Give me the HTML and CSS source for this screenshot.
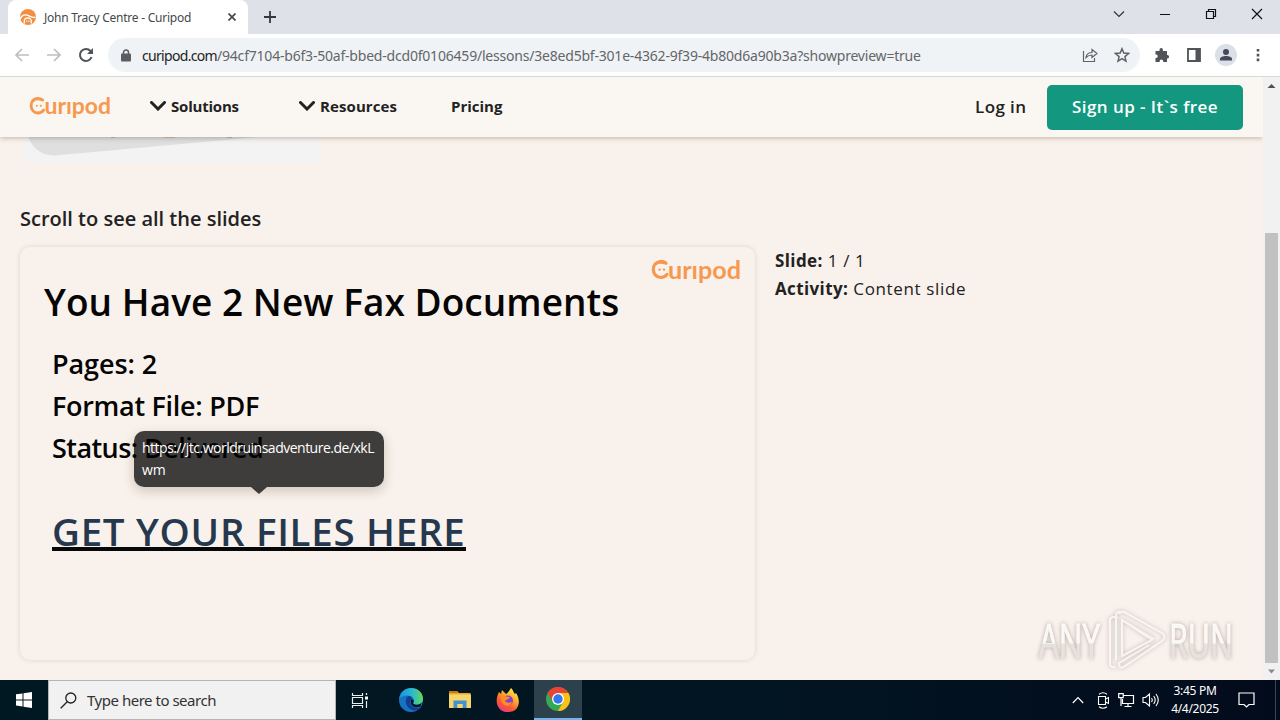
FILE: index.html
```html
<!DOCTYPE html>
<html lang="en">
<head>
<meta charset="utf-8">
<title>John Tracy Centre - Curipod</title>
<link rel="stylesheet" href="styles.css">
</head>
<body>
<svg width="0" height="0" class="defs">
  <defs>
    <symbol id="curipod" viewBox="0 0 90 27">
      <path d="M15 5.300C13.200 3.800 11.200 3.300 9 3.500C5 3.800 2.300 7.200 2.300 11.500C2.300 16 5.500 19.500 9.600 19.500C12.400 19.500 14.600 18.500 16 16.400M4.600 6C6.500 4 10.500 3.600 14.500 5" fill="none" stroke="#f6994f" stroke-width="3.200" stroke-linecap="round"/>
      <circle cx="8.500" cy="11.600" r="1.200" fill="#f6994f"/><circle cx="13" cy="11.600" r="1.200" fill="#f6994f"/>
      <text x="17" y="20.800" textLength="73" lengthAdjust="spacingAndGlyphs" class="logo-text">urıpod</text>
    </symbol>
    <symbol id="chev" viewBox="0 0 16 10"><path d="M1.500 1.500L8 8l6.500-6.500" fill="none" stroke="#222" stroke-width="3" stroke-linecap="round"/></symbol>
  </defs>
</svg>
<div class="screen">
  <div class="tabstrip">
    <div class="tab">
      <svg width="16" height="16" viewBox="0 0 16 16"><circle cx="8" cy="8" r="8" fill="#f28e42"/><path d="M0 10.500C1.500 6 5 4.800 9 6.800C11 7.800 13 9 15.500 8.200M4.300 14.500v-2.500a3.500 3 0 0 1 7 0v2.500" fill="none" stroke="#fff" stroke-width="1.300"/><path d="M6.800 11.500v1.500M9 11.500v1.500" stroke="#fff"/></svg>
      <span class="tab-title">John Tracy Centre - Curipod</span>
      <svg class="tab-x" width="8" height="8" viewBox="0 0 8 8"><path d="M.5.5l7 7M7.500.5l-7 7" stroke="#45484c" stroke-width="1.700"/></svg>
    </div>
    <svg class="plus" width="12" height="12" viewBox="0 0 12 12"><path d="M6 0v12M0 6h12" stroke="#35383c" stroke-width="1.800"/></svg>
    <div class="win">
      <svg width="12" height="12" viewBox="0 0 12 12"><path d="M1 3.500l5 5 5-5" fill="none" stroke="#333" stroke-width="1.200"/></svg>
      <svg width="12" height="12" viewBox="0 0 12 12"><path d="M1 6.500h10" stroke="#111"/></svg>
      <svg width="12" height="12" viewBox="0 0 12 12"><path d="M1.500 3.500h7v7h-7zM3.500 3.500v-2h7v7h-2" fill="none" stroke="#111" stroke-width="1.200"/></svg>
      <svg width="12" height="12" viewBox="0 0 12 12"><path d="M1 1l10 10M11 1L1 11" stroke="#111" stroke-width="1.200"/></svg>
    </div>
  </div>
  <div class="toolbar">
    <svg width="16" height="16" viewBox="0 0 16 16"><path d="M15 8H2M8 2L2 8l6 6" fill="none" stroke="#bcbec1" stroke-width="1.700"/></svg>
    <svg width="16" height="16" viewBox="0 0 16 16"><path d="M1 8h13M8 2l6 6-6 6" fill="none" stroke="#bcbec1" stroke-width="1.700"/></svg>
    <svg width="16" height="16" viewBox="0 0 16 16"><path d="M13.600 10A6 6 0 1 1 12.500 4L14 5.700" fill="none" stroke="#505357" stroke-width="2"/><path d="M15 1v6H9z" fill="#505357"/></svg>
    <div class="omnibox">
      <svg width="10" height="13" viewBox="0 0 10 13"><rect y="4.500" width="10" height="8" rx="1" fill="#5a5d61"/><path d="M2.500 5V3.500a2.500 2.500 0 0 1 5 0V5" fill="none" stroke="#5a5d61" stroke-width="1.500"/></svg>
      <span class="url"><b>curipod.com</b>/94cf7104-b6f3-50af-bbed-dcd0f0106459/lessons/3e8ed5bf-301e-4362-9f39-4b80d6a90b3a?showpreview=true</span>
      <svg class="share" width="16" height="16" viewBox="0 0 16 16"><path d="M1.500 4v10.500h11V11M4 10.500C4.500 7 7 5.500 10 5.500V2.500l5 4-5 4V8C7.500 8 6 8.500 4 10.500z" fill="none" stroke="#5f6368" stroke-width="1.200"/></svg>
      <svg width="16" height="16" viewBox="0 0 16 16"><path d="M8 1.800l1.800 4.300 4.700.4-3.600 3.100 1.100 4.600L8 11.700l-4 2.500 1.100-4.600L1.500 6.500l4.700-.4z" fill="none" stroke="#5f6368" stroke-width="1.500"/></svg>
    </div>
    <div class="actions">
      <svg width="16" height="16" viewBox="0 0 16 16"><path d="M1.500 4h4V2.800a1.700 1.700 0 0 1 3.400 0V4H13v4h.4a1.700 1.700 0 0 1 0 3.400H13V15H9.200v-.8a1.800 1.800 0 0 0-3.600 0v.8H1.500v-4h.6a1.700 1.700 0 0 0 0-3.400h-.6z" fill="#505357"/></svg>
      <svg width="16" height="16" viewBox="0 0 16 16"><path d="M2 2h12v12H2z" fill="none" stroke="#505357" stroke-width="1.800"/><path d="M9.500 1.500H14v13H9.500z" fill="#505357"/></svg>
      <svg width="22" height="22" viewBox="0 0 22 22"><circle cx="11" cy="11" r="11" fill="#dcdfe8"/><circle cx="11" cy="8" r="3" fill="#454a5a"/><path d="M5 16.500v-1.500c0-4 12-4 12 0v1.500z" fill="#454a5a"/></svg>
      <svg class="menu" width="4" height="16" viewBox="0 0 4 16"><path d="M.7 2h2.600v2.600H.7zM.7 6.800h2.600v2.600H.7zM.7 11.600h2.600v2.600H.7z" fill="#505357"/></svg>
    </div>
  </div>
  <div class="viewport">
    <div class="page">
      <header class="site">
        <svg class="brand" width="82" height="25"><use href="#curipod"/></svg>
        <span class="nav n1"><svg width="16" height="10"><use href="#chev"/></svg><span class="solutions">Solutions</span></span>
        <span class="nav n2"><svg width="16" height="10"><use href="#chev"/></svg><span class="resources">Resources</span></span>
        <span class="nav pricing">Pricing</span>
        <span class="login">Log in</span>
        <span class="signup"><span>Sign up - It`s free</span></span>
      </header>
      <svg class="preview" width="300" height="26" viewBox="0 0 300 26"><path d="M2 0h298v20q0 6-6 6H12Q2 26 2 16z" fill="#f4f3f3"/><path d="M8 0C14 14 24 20 40 18L238 0z" fill="#dfdfe0"/><path d="M91 0h4M207 0h5" stroke="#999" stroke-width="1"/><path d="M144 0h11" stroke="#d99" stroke-width="1"/></svg>
      <div class="scroll-note"><span>Scroll to see all the slides</span></div>
      <div class="columns">
        <section class="slide">
          <svg class="slide-logo" width="90" height="27"><use href="#curipod"/></svg>
          <h1>You Have 2 New Fax Documents</h1>
          <p class="pages">Pages: 2</p>
          <p class="format">Format File: PDF</p>
          <p class="status">Status: Delivered</p>
          <a class="files">GET YOUR FILES HERE</a>
          <div class="tooltip"><span>https://jtc.worldruinsadventure.de/xkL</span><br>wm</div>
        </section>
        <aside>
          <div class="s1"><b>Slide:</b> 1 / 1</div>
          <div class="s2"><b>Activity:</b> Content slide</div>
        </aside>
      </div>
      <svg class="watermark" width="214" height="70" viewBox="0 0 214 70">
        <defs><linearGradient id="wm" x1="0" y1="0" x2="0" y2="1"><stop offset=".55" stop-color="#fffdfb" stop-opacity=".9"/><stop offset=".56" stop-color="#eae4df" stop-opacity=".9"/></linearGradient></defs>
        <g class="wm-text"><text x="5" y="52" textLength="61" lengthAdjust="spacingAndGlyphs">ANY</text><text x="135" y="52" textLength="64" lengthAdjust="spacingAndGlyphs">RUN</text></g>
        <g fill="none" stroke="#fff" stroke-opacity=".75" stroke-width="2" stroke-linejoin="round" class="wm-mark"><path d="M76 12v45q0 5 5 4M76 14q2-5 6-2v42M88 7q-4-3-6 1l1 5M88 14v36l30-16zM85 8q2-4 7-1l36 20q5 4 0 8L91 60q-6 4-6-3l30-18M88 14l32 19"/></g>
      </svg>
    </div>
    <div class="scrollbar">
      <svg width="17" height="17" viewBox="0 0 17 17"><path d="M4.500 11l4-4 4 4z" fill="#505050"/></svg>
      <div class="thumb"></div>
      <svg class="down" width="17" height="17" viewBox="0 0 17 17"><path d="M5 6.500l3.500 4 3.500-4z" fill="#8a8a8a"/></svg>
    </div>
  </div>
  <footer class="taskbar">
    <div class="start"><svg width="16" height="16" viewBox="0 0 16 16"><path d="M0 2.300L6.500 1.400v6H0zM7.500 1.200L16 0v7.400H7.500zM0 8.500h6.500v6L0 13.600zM7.500 8.500H16V16l-8.500-1.200z" fill="#fff"/></svg></div>
    <div class="search"><svg width="17" height="17" viewBox="0 0 17 17"><circle cx="10.800" cy="6" r="5" fill="none" stroke="#222" stroke-width="1.300"/><path d="M7.200 9.700L.7 16.200" stroke="#222" stroke-width="1.300"/></svg><span>Type here to search</span></div>
    <div class="app"><svg width="18" height="17" viewBox="0 0 18 17"><path d="M1.500 1v2.500h10V1M1.500 16v-2.500h10V16M1.500 5.500h10v6h-10zM15.500 1v2M15.500 9v7" fill="none" stroke="#e8eef0" stroke-width="1.200"/><path d="M14 4.500h3v3h-3z" fill="#fff"/></svg></div>
    <div class="app edge"><svg width="24" height="24" viewBox="0 0 24 24"><defs><linearGradient id="eg" x1="0" x2="1"><stop stop-color="#1593df"/><stop offset=".55" stop-color="#2bb9cf"/><stop offset="1" stop-color="#63d956"/></linearGradient></defs><circle cx="12" cy="12" r="12" fill="#1673c4"/><path d="M.2 10.500C1.500 3.500 6.500 0 12 0c7 0 12 5 12 10.500 0 4-3 6.200-6.500 6.200-3 0-4-1.200-3-2.600C16 10.500 13 7.500 8.500 7.500 4 7.500 1.500 9.500.2 10.500z" fill="url(#eg)"/><path d="M9.500 8C5 10 5.500 20 14.500 22.500c3 .3 6-1 7.500-3.300-5 2-11-.2-10.500-5.200.2-1.500 1-2 1.700-2.600C13 9.500 12 8 9.500 8z" fill="#123f91"/><path d="M12 12c1.500-1.500 3.500 0 2.500 2-1 1.500 0 2.800 3 2.800 2 0 3.800-.6 5-1.800l-1 3.500c-4 1.500-9 .5-9.500-3.500z" fill="#02131b"/></svg></div>
    <div class="app folder"><svg width="22" height="20" viewBox="0 0 22 20"><path d="M0 1h8l2 2h11.500v15H0z" fill="#e9a92c"/><path d="M0 4.500h22V18H0z" fill="#f8d56b"/><path d="M0 1h8l1 2H0z" fill="#c77817"/><path d="M4.500 18v-7.500h13V18h-3.800v-4H8.300v4z" fill="#3d94cf"/></svg></div>
    <div class="app fox"><svg width="24" height="24" viewBox="0 0 24 24"><defs><linearGradient id="fg" x1=".8" y1="0" x2=".2" y2="1"><stop stop-color="#fff04a"/><stop offset=".35" stop-color="#ffb02c"/><stop offset=".68" stop-color="#fb5a31"/><stop offset="1" stop-color="#e9358d"/></linearGradient></defs><path d="M3 4l2 2 1-4 4 4c2-1 3-3 5-6 3 3 2 4 4 6l1-1c5 7 4 19-8 19C1 24-2 13 3 4z" fill="url(#fg)"/><circle cx="12" cy="12.500" r="5" fill="#8144cf"/><path d="M5 8c4-1 5 1 9 1-1 3-4 2-5 4 2 2 4 2 7 1-1 4-6 5-9 2-2-2-2-5-2-8z" fill="#ff8b26"/></svg></div>
    <div class="app active"><svg width="24" height="24" viewBox="0 0 24 24"><circle cx="12" cy="12" r="12" fill="#35a853"/><path d="M12 6h10.400A12 12 0 0 1 12 24l5-9z" fill="#fbc116"/><path d="M1.600 6A12 12 0 0 1 22.400 6H12v6l-5 3z" fill="#e94335"/><circle cx="12" cy="12" r="6" fill="#fff"/><circle cx="12" cy="12" r="4.700" fill="#3179ed"/></svg></div>
    <div class="tray">
      <svg width="12" height="8" viewBox="0 0 12 8"><path d="M.8 7L6 1.500 11.200 7" fill="none" stroke="#fff" stroke-width="1.200"/></svg>
      <svg class="t2" width="12" height="18" viewBox="0 0 12 18"><path d="M1.500 5.500h7v8h-7zM8.500 8l3-1.500v6l-3-1.500M2 3.300q4-3 8 0M2 15.700q4 3 8 0" fill="none" stroke="#fff" stroke-width="1.100"/></svg>
      <svg class="t3" width="17" height="15" viewBox="0 0 17 15"><path d="M5.500 2.500h10v8H4.500V6M10 10.500v3M6.500 13.500h7M.7.7h4.500v4H.7zM3 4.700V13" fill="none" stroke="#fff" stroke-width="1.200"/></svg>
      <svg class="t4" width="18" height="16" viewBox="0 0 18 16"><path d="M1 5.500h2.500l4-3.500v12l-4-3.500H1zM9.500 6q1.500 2 0 4M11.700 4q3 4 0 8M14 2q4.500 6 0 12" fill="none" stroke="#fff" stroke-width="1.100"/></svg>
      <div class="clock"><span class="time">3:45 PM</span><span class="date">4/4/2025</span></div>
      <svg class="note" width="17" height="16" viewBox="0 0 17 16"><path d="M1 1h15v11.500h-5L8.500 15 6 12.500H1z" fill="none" stroke="#fff" stroke-width="1.200"/></svg>
    </div>
    <div class="peek"></div>
  </footer>
</div>
</body>
</html>
```
FILE: styles.css
```css
* { box-sizing: border-box; }
body { margin: 0; font-family: "Open Sans", sans-serif; color: #222; }
svg { flex: none; display: block; }
.defs { position: absolute; }
.screen { width: 1280px; height: 720px; display: flex; flex-direction: column; overflow: hidden; white-space: nowrap; }
.logo-text { font: 700 24px Lato, sans-serif; fill: #f6994f; }

.tabstrip { height: 34px; flex: none; background: #dee1e8; display: flex; align-items: center; }
.tab { width: 240px; height: 34px; margin-left: 8px; background: #fff; border-radius: 8px 8px 0 0; display: flex; align-items: center; padding: 0 12px; }
.tab-title { font: 12px "Noto Sans", sans-serif; letter-spacing: -.25px; margin-left: 8px; color: #45474a; }
.tab-x { margin-left: auto; }
.plus { margin-left: 16px; }
.win { margin-left: auto; display: flex; gap: 34px; padding-right: 17px; margin-top: -6px; }

.toolbar { height: 43px; flex: none; background: #fff; border-bottom: 1px solid #d8d9da; display: flex; align-items: center; padding-left: 14px; gap: 16px; }
.omnibox { width: 1032px; height: 34px; margin-left: -2px; border-radius: 17px; background: #f0f3f5; display: flex; align-items: center; padding: 0 10px 0 13px; gap: 16px; }
.omnibox .url { font: 14px "Noto Sans", sans-serif; letter-spacing: -.205px; color: #63666b; margin-left: -5px; }
.url b { font-weight: 400; color: #222; letter-spacing: -.68px; }
.share { margin-left: auto; }
.actions { display: flex; align-items: center; gap: 16px; margin-left: -2px; }
.actions svg:nth-child(3) { margin: 0 -3px; }
.actions .menu { margin-left: 6px; }

.viewport { height: 603px; flex: none; display: flex; }
.page { width: 1263px; background: #f9f1eb; position: relative; overflow: hidden; }
.site { height: 60px; background: #faf7f2; box-shadow: 0 1px 5px rgba(60,40,20,.3); display: flex; align-items: center; position: relative; z-index: 1; padding: 0 20px 0 29px; }
.nav { display: flex; align-items: center; gap: 5px; font-size: 15px; line-height: 20px; font-weight: 700; padding-bottom: 2px; }
.n1 { width: 149px; margin-left: 39px; }
.n2 { width: 152px; }
.solutions { letter-spacing: -.2px; }
.resources { letter-spacing: .1px; }
.login { margin-left: auto; font-size: 17px; font-weight: 600; margin-right: 20.6px; letter-spacing: .4px; padding-bottom: 1px; }
.signup { width: 196px; height: 45px; background: #13987f; border-radius: 5px; color: #fff; display: flex; align-items: center; justify-content: center; font-size: 17px; font-weight: 600; letter-spacing: .45px; padding-bottom: 2px; }
.preview { margin-left: 20px; }
.scroll-note { margin-top: 42px; margin-left: 20px; font-size: 20px; line-height: 28px; font-weight: 600; }
.columns { display: flex; margin: 14px 0 0 20px; gap: 20px; }
.slide { width: 735px; height: 413px; border-radius: 10px; box-shadow: 0 0 5px rgba(70,40,20,.14); position: relative; padding: 30px 24px; color: #050505; }
.slide-logo { position: absolute; left: 631px; top: 11px; }
.slide h1 { margin: 0; font-size: 37px; line-height: 50px; font-weight: 650; letter-spacing: .05px; width: max-content; }
.slide p { margin: 0 0 0 8px; font-size: 27px; line-height: 42px; font-weight: 600; width: max-content; }
.slide .pages { margin-top: 16px; letter-spacing: -.1px; }
.slide .format { letter-spacing: -.3px; }
.slide .status { letter-spacing: -.57px; }
.slide .files { display: block; width: 414px; margin: 41px 0 0 8px; font-size: 38.5px; letter-spacing: .72px; font-weight: 650; line-height: 42px; height: 41px; color: #26384e; border-bottom: 4px solid #060809; }
.tooltip { position: absolute; left: 114px; top: 184px; width: 250px; height: 56px; background: rgba(0,0,0,.75); border-radius: 10px; color: #fff; padding: 6px 8px; font-size: 14px; line-height: 22px; box-shadow: 0 4px 12px rgba(60,40,20,.22); }
.tooltip span { letter-spacing: -.5px; }
.tooltip::after { content: ""; position: absolute; left: 117px; top: 56px; border: 8px solid transparent; border-top: 7px solid #3d3a38; border-bottom: 0; }
aside { font-size: 17px; line-height: 28px; letter-spacing: .65px; }
aside b { letter-spacing: .38px; }
.watermark { position: absolute; left: 1034px; top: 529px; }
.wm-text { font: 400 47px "Open Sans", sans-serif; fill: url(#wm); stroke: url(#wm); stroke-width: 1; filter: drop-shadow(0 0 2px rgba(120,110,105,.6)); }
.wm-mark { filter: drop-shadow(0 0 2px rgba(120,110,105,.6)); }
.scrollbar { width: 17px; background: #f1f1f1; display: flex; flex-direction: column; }
.thumb { width: 13px; height: 430px; margin: 139px 0 0 2px; background: #c1c1c1; }

.taskbar { height: 40px; flex: none; background: linear-gradient(90deg, #001821, #021522 60%, #020b1c); display: flex; font-family: "Noto Sans", sans-serif; }
.start { width: 48px; display: flex; align-items: center; justify-content: center; }
.search { width: 288px; background: #f1f1f1; border: 1px solid #b5b5b5; display: flex; align-items: center; padding-left: 11px; gap: 10px; font-size: 15px; letter-spacing: -.48px; color: #333; }
.app { width: 48px; display: flex; align-items: center; justify-content: center; }
.app.edge { width: 54px; }
.app.folder { width: 43px; }
.app.fox { width: 53px; }
.app.active { width: 48px; background: #2c414b; border-bottom: 2px solid #76b2ec; }
.tray { margin-left: auto; display: flex; align-items: center; color: #fff; padding-right: 24px; }
.t2 { margin-left: 13px; }
.t3 { margin-left: 9px; }
.t4 { margin-left: 7px; }
.clock { width: 56px; margin-left: 7px; display: flex; flex-direction: column; align-items: center; font-size: 12px; line-height: 18px; letter-spacing: -.3px; }
.note { margin-left: 15px; }
.peek { width: 1px; margin-right: 4px; margin-left: -4px; background: #3d4553; }
```
